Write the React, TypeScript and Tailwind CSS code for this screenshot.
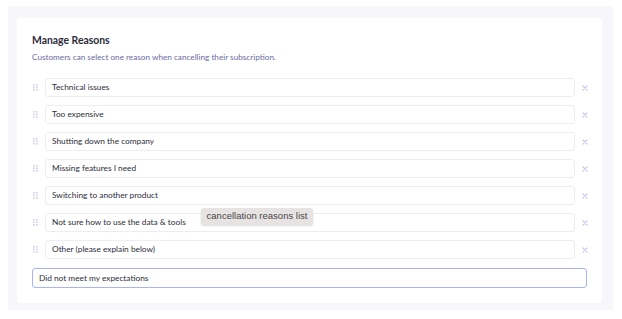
import React from 'react';

const reasons = [
  'Technical issues',
  'Too expensive',
  'Shutting down the company',
  'Missing features I need',
  'Switching to another product',
  'Not sure how to use the data & tools',
  'Other (please explain below)',
];

function Handle() {
  return (
    <svg width="5" height="7" viewBox="0 0 5 7" className="text-[#cfd0ee]">
      {[0, 1, 2].map((r) => (
        <g key={r} fill="currentColor">
          <rect x="0" y={r * 2.5} width="1.6" height="1.6" />
          <rect x="3" y={r * 2.5} width="1.6" height="1.6" />
        </g>
      ))}
    </svg>
  );
}

function Cross() {
  return (
    <svg width="6" height="6" viewBox="0 0 6 6" className="text-[#c9caf0]">
      <path d="M1 1 L5 5 M5 1 L1 5" stroke="currentColor" strokeWidth="1.2" strokeLinecap="round" />
    </svg>
  );
}

function ReasonRow({ text }: { text: string }) {
  return (
    <div className="flex items-center h-[19px]">
      <div className="w-[13px] flex pl-[1px]">
        <Handle />
      </div>
      <div className="flex-1 h-full flex items-center pl-[6px] rounded-[3px] border border-[#ececf8] bg-white text-[8.3px] text-[#2e2e3a]">
        {text}
      </div>
      <div className="w-[13px] flex justify-end -mr-[1px]">
        <Cross />
      </div>
    </div>
  );
}

export default function App() {
  return (
    <div className="w-[622px] h-[319px] bg-white pt-[6px] pl-[8px]" style={{ fontFamily: 'Lato, Inter, sans-serif' }}>
      <div className="w-[605px] h-[304px] bg-[#f6f6fb] pt-[12px] pl-[9px]">
        <div className="w-[585px] h-[285px] bg-white rounded-[3px] px-[15px] pt-[15px]">
          <h2 className="h-[14px] leading-[14px] text-[10.4px] font-bold text-[#2c2c3a]">Manage Reasons</h2>
          <p className="mt-[4px] h-[12px] leading-[12px] text-[8.2px] text-[#6b6aa6]">
            Customers can select one reason when cancelling their subscription.
          </p>
          <div className="mt-[15px] flex flex-col gap-[8px]">
            {reasons.map((r) => (
              <ReasonRow key={r} text={r} />
            ))}
          </div>
          <div className="mt-[9px] h-[20px] flex items-center pl-[6px] rounded-[3px] border border-[#aab3f6] text-[8.3px] text-[#2e2e3a]">
            Did not meet my expectations
          </div>
        </div>
      </div>
      <div
        className="absolute left-[201px] top-[208px] h-[17px] w-[112px] flex items-center justify-center rounded-[3px] bg-[#e7e3e3] text-[9.5px] text-[#4a4646] shadow-[0_1px_2px_rgba(0,0,0,0.15)]"
        style={{ fontFamily: '"Liberation Sans", Arial, sans-serif' }}
      >
        cancellation reasons list
      </div>
    </div>
  );
}
